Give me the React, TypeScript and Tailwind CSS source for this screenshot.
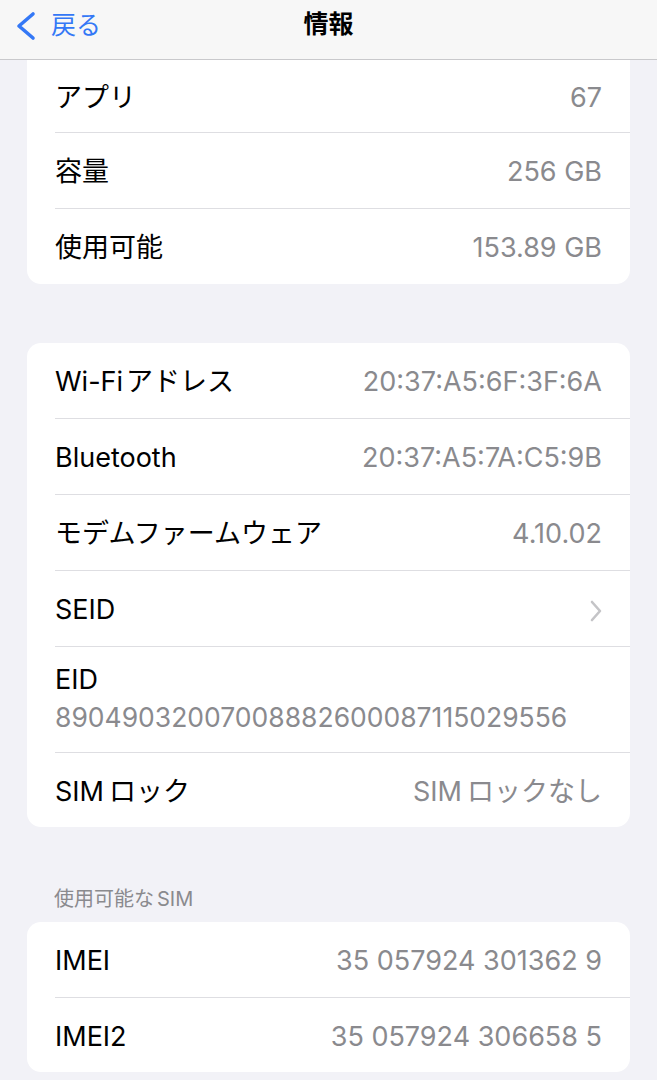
import React from "react";

const font = { fontFamily: 'Inter, "Noto Sans CJK JP", sans-serif' };

function Row({
  label,
  value,
  h,
  first,
  chevron,
}: {
  label: React.ReactNode;
  value?: React.ReactNode;
  h: string;
  first?: boolean;
  chevron?: boolean;
}) {
  return (
    <div className="pl-[28px]">
      <div
        className={`${h} flex items-center justify-between pr-[28px] pt-[4px] ${
          first ? "" : "border-t border-[#dedee2]"
        }`}
      >
        <span className="text-[27px] text-black whitespace-nowrap">{label}</span>
        {value && <span className="text-[27px] text-[#8a8a8e] whitespace-nowrap">{value}</span>}
        {chevron && (
          <svg width="14" height="22" viewBox="0 0 14 22" className="mr-[-1px]">
            <path
              d="M3 2 L11 11 L3 20"
              fill="none"
              stroke="#c4c4c7"
              strokeWidth="2.6"
              strokeLinecap="round"
              strokeLinejoin="round"
            />
          </svg>
        )}
      </div>
    </div>
  );
}

export default function App() {
  return (
    <div className="w-[657px] h-[1080px] bg-[#f2f2f7] overflow-hidden" style={font}>
      <div className="h-[60px] bg-[#f7f7f7] border-b border-[#c9c9cc] grid grid-cols-[1fr_auto_1fr] items-center">
        <div className="flex items-center pl-[14px] mt-[-7px]">
          <svg width="24" height="30" viewBox="0 0 24 30">
            <path
              d="M19 3 L5 15 L19 27"
              fill="none"
              stroke="#3478f6"
              strokeWidth="3.6"
              strokeLinecap="round"
              strokeLinejoin="round"
            />
          </svg>
          <span className="ml-[13px] text-[25px] text-[#3478f6] leading-none mt-[-2px]">戻る</span>
        </div>
        <div className="text-[25px] font-bold text-black mt-[-9px]">情報</div>
        <div />
      </div>

      <div className="mx-[27px] bg-white rounded-b-[14px]">
        <Row label="アプリ" value="67" h="h-[72px]" first />
        <Row label="容量" value="256 GB" h="h-[76px]" />
        <Row label="使用可能" value="153.89 GB" h="h-[76px]" />
      </div>

      <div className="mx-[27px] mt-[59px] bg-white rounded-[14px]">
        <Row
          label={
            <>
              Wi-Fi<span className="ml-[3px]">アドレス</span>
            </>
          }
          value="20:37:A5:6F:3F:6A"
          h="h-[75px]"
          first
        />
        <Row label="Bluetooth" value="20:37:A5:7A:C5:9B" h="h-[76px]" />
        <Row label="モデムファームウェア" value="4.10.02" h="h-[76px]" />
        <Row label="SEID" h="h-[76px]" chevron />
        <div className="pl-[28px]">
          <div className="h-[106px] border-t border-[#dedee2] pt-[15px] flex flex-col">
            <span className="text-[27px] leading-[36px] text-black">EID</span>
            <span className="text-[26.5px] leading-[38px] text-[#8a8a8e]">
              89049032007008882600087115029556
            </span>
          </div>
        </div>
        <Row
          label={
            <>
              SIM<span className="ml-[5px]">ロック</span>
            </>
          }
          value={
            <>
              SIM<span className="ml-[5px]">ロックなし</span>
            </>
          }
          h="h-[75px]"
        />
      </div>

      <div className="mt-[58px] mb-[9px] pl-[54px] text-[20px] leading-[28px] text-[#8a8a8e]">
        使用可能な<span className="ml-[3px]">SIM</span>
      </div>

      <div className="mx-[27px] bg-white rounded-[14px]">
        <Row label="IMEI" value="35 057924 301362 9" h="h-[75px]" first />
        <Row label="IMEI2" value="35 057924 306658 5" h="h-[75px]" />
      </div>
    </div>
  );
}
